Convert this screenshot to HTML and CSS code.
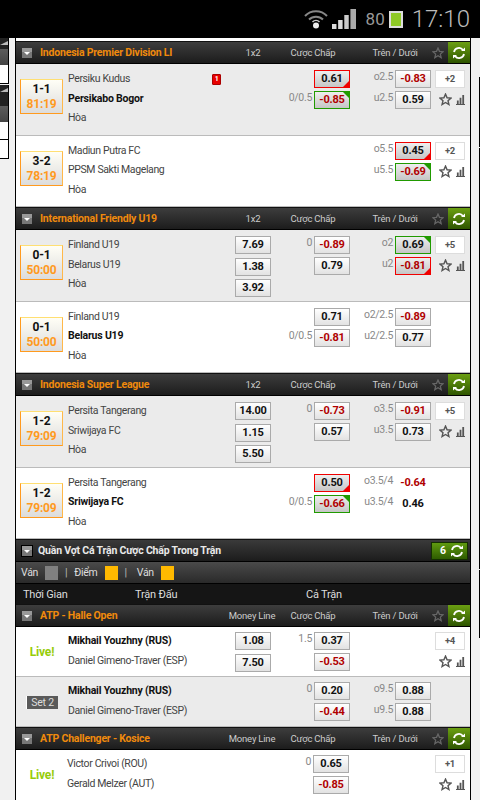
FILE: index.html
```html
<!DOCTYPE html>
<html lang="vi">
<head>
    <meta charset="UTF-8">
    <meta name="viewport" content="width=device-width, initial-scale=1.0">
    <title>Cược Chấp</title>
    <link rel="stylesheet" href="styles.css">
</head>
<body>
    <svg class="defs" width="0" height="0">
        <symbol id="i-star" viewBox="0 0 14 14"><path d="M7 1.200l1.700 3.900 4.200.4-3.200 2.800 1 4.100L7 10.200l-3.700 2.200 1-4.100L1.100 5.500l4.200-.4z" fill="none" stroke="currentColor" stroke-width="1.500"/></symbol>
        <symbol id="i-bars" viewBox="0 0 10 12"><path d="M0 11h10v1H0zM1 7h2v4H1zM4 4h2v7H4zM7 1h2v10H7z" fill="currentColor"/></symbol>
        <symbol id="i-refresh" viewBox="0 0 14 14"><path d="M2 6a5 5 0 0 1 9-2M12 8a5 5 0 0 1-9 2" fill="none" stroke="currentColor" stroke-width="1.800"/><path d="M9 5h4V1.500zM5 9H1v3.500z" fill="currentColor"/></symbol>
        <symbol id="i-toggle" viewBox="0 0 10 10"><rect width="10" height="10" fill="#777"/><rect width="10" height="4" fill="#999"/><path d="M2 4h6L5 7z" fill="#fff"/></symbol>
    </svg>

    <!-- thanh trạng thái -->
    <div class="status-bar">
        <svg class="wifi" width="24" height="20" viewBox="0 0 24 20"><path d="M1 7a15 15 0 0 1 22 0M5 10.500a10 10 0 0 1 14 0" fill="none" stroke="#888" stroke-width="2"/><path d="M8.500 13a5 5 0 0 1 7 0" fill="none" stroke="#ccc" stroke-width="1.500"/><circle cx="12" cy="16.500" r="3" fill="#eee"/></svg>
        <svg class="signal" width="24" height="20" viewBox="0 0 21.500 20" preserveAspectRatio="none"><path d="M0 15h4v5H0z" fill="#ddd"/><path d="M5.500 11h4v9h-4z" fill="#ddd"/><path d="M11 6h4v14h-4z" fill="#ccc"/><path d="M16.500 0h5v20h-5z" fill="#aaa"/></svg>
        <span class="battery-text">80</span>
        <span class="battery"></span>
        <span class="clock">17:10</span>
    </div>

    <div class="page">
        <div class="rail-left">
            <div class="rail-block">
                <div class="rail-head"></div>
                <div class="rail-gray"></div>
                <div class="rail-cell"></div>
            </div>
            <div class="rail-block">
                <div class="rail-head full"></div>
                <div class="rail-gray"></div>
                <div class="rail-cell"></div>
                <div class="rail-cell"></div>
            </div>
        </div>

        <div class="main">
            <div class="league">
                <span class="league-title"><svg class="toggle"><use href="#i-toggle"/></svg>Indonesia Premier Division LI</span>
                <span class="col-a">1x2</span><span class="col-b">Cược Chấp</span><span class="col-c">Trên / Dưới</span>
                <span class="league-tools"><svg class="star-head"><use href="#i-star"/></svg><span class="refresh"><svg><use href="#i-refresh"/></svg></span></span>
            </div>
            <div class="match shaded">
                <div class="score"><div class="score-box"><b>1-1</b><i>81:19</i></div></div>
                <div class="teams"><div>Persiku Kudus<span class="red-card">1</span></div><div class="bold">Persikabo Bogor</div><div>Hòa</div></div>
                <div class="odds-a"></div>
                <div class="odds-b">
                    <div class="line"><a class="cell hot down">0.61</a></div>
                    <div class="line"><span class="lbl">0/0.5</span><a class="cell hot up neg">-0.85</a></div>
                </div>
                <div class="odds-c">
                    <div class="line"><span class="lbl">o2.5</span><a class="cell neg">-0.83</a></div>
                    <div class="line"><span class="lbl">u2.5</span><a class="cell">0.59</a></div>
                </div>
                <div class="side"><a class="more">+2</a><div class="tools"><svg class="star"><use href="#i-star"/></svg><svg class="bars"><use href="#i-bars"/></svg></div></div>
            </div>
            <div class="match">
                <div class="score"><div class="score-box"><b>3-2</b><i>78:19</i></div></div>
                <div class="teams"><div>Madiun Putra FC</div><div>PPSM Sakti Magelang</div><div>Hòa</div></div>
                <div class="odds-a"></div>
                <div class="odds-b"></div>
                <div class="odds-c">
                    <div class="line"><span class="lbl">o5.5</span><a class="cell hot down">0.45</a></div>
                    <div class="line"><span class="lbl">u5.5</span><a class="cell hot up neg">-0.69</a></div>
                </div>
                <div class="side"><a class="more">+2</a><div class="tools"><svg class="star"><use href="#i-star"/></svg><svg class="bars"><use href="#i-bars"/></svg></div></div>
            </div>

            <div class="league">
                <span class="league-title"><svg class="toggle"><use href="#i-toggle"/></svg>International Friendly U19</span>
                <span class="col-a">1x2</span><span class="col-b">Cược Chấp</span><span class="col-c">Trên / Dưới</span>
                <span class="league-tools"><svg class="star-head"><use href="#i-star"/></svg><span class="refresh"><svg><use href="#i-refresh"/></svg></span></span>
            </div>
            <div class="match shaded">
                <div class="score"><div class="score-box"><b>0-1</b><i>50:00</i></div></div>
                <div class="teams"><div>Finland U19</div><div>Belarus U19</div><div>Hòa</div></div>
                <div class="odds-a"><a class="cell">7.69</a><a class="cell">1.38</a><a class="cell">3.92</a></div>
                <div class="odds-b">
                    <div class="line"><span class="lbl">0</span><a class="cell neg">-0.89</a></div>
                    <div class="line"><a class="cell">0.79</a></div>
                </div>
                <div class="odds-c">
                    <div class="line"><span class="lbl">o2</span><a class="cell hot up">0.69</a></div>
                    <div class="line"><span class="lbl">u2</span><a class="cell hot down neg">-0.81</a></div>
                </div>
                <div class="side"><a class="more">+5</a><div class="tools"><svg class="star"><use href="#i-star"/></svg><svg class="bars"><use href="#i-bars"/></svg></div></div>
            </div>
            <div class="match">
                <div class="score"><div class="score-box"><b>0-1</b><i>50:00</i></div></div>
                <div class="teams"><div>Finland U19</div><div class="bold">Belarus U19</div><div>Hòa</div></div>
                <div class="odds-a"></div>
                <div class="odds-b">
                    <div class="line"><a class="cell">0.71</a></div>
                    <div class="line"><span class="lbl">0/0.5</span><a class="cell neg">-0.81</a></div>
                </div>
                <div class="odds-c">
                    <div class="line"><span class="lbl">o2/2.5</span><a class="cell neg">-0.89</a></div>
                    <div class="line"><span class="lbl">u2/2.5</span><a class="cell">0.77</a></div>
                </div>
                <div class="side"></div>
            </div>

            <div class="league">
                <span class="league-title"><svg class="toggle"><use href="#i-toggle"/></svg>Indonesia Super League</span>
                <span class="col-a">1x2</span><span class="col-b">Cược Chấp</span><span class="col-c">Trên / Dưới</span>
                <span class="league-tools"><svg class="star-head"><use href="#i-star"/></svg><span class="refresh"><svg><use href="#i-refresh"/></svg></span></span>
            </div>
            <div class="match shaded">
                <div class="score"><div class="score-box"><b>1-2</b><i>79:09</i></div></div>
                <div class="teams"><div>Persita Tangerang</div><div>Sriwijaya FC</div><div>Hòa</div></div>
                <div class="odds-a"><a class="cell">14.00</a><a class="cell">1.15</a><a class="cell">5.50</a></div>
                <div class="odds-b">
                    <div class="line"><span class="lbl">0</span><a class="cell neg">-0.73</a></div>
                    <div class="line"><a class="cell">0.57</a></div>
                </div>
                <div class="odds-c">
                    <div class="line"><span class="lbl">o3.5</span><a class="cell neg">-0.91</a></div>
                    <div class="line"><span class="lbl">u3.5</span><a class="cell">0.73</a></div>
                </div>
                <div class="side"><a class="more">+5</a><div class="tools"><svg class="star"><use href="#i-star"/></svg><svg class="bars"><use href="#i-bars"/></svg></div></div>
            </div>
            <div class="match">
                <div class="score"><div class="score-box"><b>1-2</b><i>79:09</i></div></div>
                <div class="teams"><div>Persita Tangerang</div><div class="bold">Sriwijaya FC</div><div>Hòa</div></div>
                <div class="odds-a"></div>
                <div class="odds-b">
                    <div class="line"><a class="cell hot down">0.50</a></div>
                    <div class="line"><span class="lbl">0/0.5</span><a class="cell hot up neg">-0.66</a></div>
                </div>
                <div class="odds-c">
                    <div class="line"><span class="lbl">o3.5/4</span><a class="cell plain neg">-0.64</a></div>
                    <div class="line"><span class="lbl">u3.5/4</span><a class="cell plain">0.46</a></div>
                </div>
                <div class="side"></div>
            </div>

            <!-- quần vợt -->
            <div class="sport">
                <span class="sport-title"><svg class="toggle boxed"><use href="#i-toggle"/></svg>Quần Vợt Cá Trận Cược Chấp Trong Trận</span>
                <span class="count">6<svg><use href="#i-refresh"/></svg></span>
            </div>
            <div class="legend">
                <span>Ván</span><span class="sq gray"></span><span class="sep">|</span><span>Điểm</span><span class="sq yellow"></span><span class="sep">|</span><span class="far">Ván</span><span class="sq yellow"></span>
            </div>
            <div class="columns">
                <span class="c-time">Thời Gian</span><span class="c-match">Trận Đấu</span><span class="c-full">Cả Trận</span>
            </div>

            <div class="league">
                <span class="league-title"><svg class="toggle"><use href="#i-toggle"/></svg>ATP - Halle Open</span>
                <span class="col-a wide">Money Line</span><span class="col-b">Cược Chấp</span><span class="col-c">Trên / Dưới</span>
                <span class="league-tools"><svg class="star-head"><use href="#i-star"/></svg><span class="refresh"><svg><use href="#i-refresh"/></svg></span></span>
            </div>
            <div class="match tennis">
                <div class="score"><span class="live">Live!</span></div>
                <div class="teams"><div class="bold">Mikhail Youzhny (RUS)</div><div>Daniel Gimeno-Traver (ESP)</div></div>
                <div class="odds-a"><a class="cell">1.08</a><a class="cell">7.50</a></div>
                <div class="odds-b">
                    <div class="line"><span class="lbl">1.5</span><a class="cell">0.37</a></div>
                    <div class="line"><a class="cell neg">-0.53</a></div>
                </div>
                <div class="odds-c"></div>
                <div class="side"><a class="more">+4</a><div class="tools"><svg class="star"><use href="#i-star"/></svg><svg class="bars"><use href="#i-bars"/></svg></div></div>
            </div>
            <div class="match tennis shaded">
                <div class="score"><span class="set">Set 2</span></div>
                <div class="teams"><div class="bold">Mikhail Youzhny (RUS)</div><div>Daniel Gimeno-Traver (ESP)</div></div>
                <div class="odds-a"></div>
                <div class="odds-b">
                    <div class="line"><span class="lbl">0</span><a class="cell">0.20</a></div>
                    <div class="line"><a class="cell neg">-0.44</a></div>
                </div>
                <div class="odds-c">
                    <div class="line"><span class="lbl">o9.5</span><a class="cell">0.88</a></div>
                    <div class="line"><span class="lbl">u9.5</span><a class="cell">0.88</a></div>
                </div>
                <div class="side"></div>
            </div>

            <div class="league">
                <span class="league-title"><svg class="toggle"><use href="#i-toggle"/></svg>ATP Challenger - Kosice</span>
                <span class="col-a wide">Money Line</span><span class="col-b">Cược Chấp</span><span class="col-c">Trên / Dưới</span>
                <span class="league-tools"><svg class="star-head"><use href="#i-star"/></svg><span class="refresh"><svg><use href="#i-refresh"/></svg></span></span>
            </div>
            <div class="match tennis nudge">
                <div class="score"><span class="live">Live!</span></div>
                <div class="teams"><div>Victor Crivoi (ROU)</div><div>Gerald Melzer (AUT)</div></div>
                <div class="odds-a"></div>
                <div class="odds-b">
                    <div class="line"><span class="lbl">0</span><a class="cell">0.65</a></div>
                    <div class="line"><a class="cell neg">-0.85</a></div>
                </div>
                <div class="odds-c"></div>
                <div class="side"><a class="more">+1</a><div class="tools"><svg class="star"><use href="#i-star"/></svg><svg class="bars"><use href="#i-bars"/></svg></div></div>
            </div>
        </div>

        <div class="rail-right">
            <div class="rail-stub top"></div>
            <div class="rail-stub s1"></div>
            <div class="rail-stub s2"></div>
            <div class="rail-stub s3"></div>
        </div>
    </div>
</body>
</html>
```

FILE: styles.css
```css
* {
    margin: 0;
    padding: 0;
    box-sizing: border-box;
}

html, body {
    height: 800px;
    overflow: hidden;
}

body {
    font-family: Roboto, 'Open Sans', sans-serif;
    font-size: 10.5px;
    letter-spacing: -0.2px;
    background: #f1f1f1;
    color: #444;
}

.defs {
    display: block;
    height: 0;
}

.status-bar {
    height: 38px;
    background: #000;
    display: flex;
    align-items: center;
    justify-content: flex-end;
    padding-right: 10px;
    letter-spacing: 0;
}

.wifi {
    margin-right: 4px;
}

.signal {
    margin-right: 10px;
}

.battery-text {
    font-size: 17px;
    color: #999;
    margin-right: 4px;
}

.battery {
    width: 14px;
    height: 17px;
    background: #8fc926;
    border: 2px solid #ddd;
    margin-right: 9px;
}

.clock {
    font-weight: 300;
    font-size: 24px;
    color: #bbb;
}

.page {
    display: flex;
    height: 762px;
}

.rail-left {
    width: 15px;
    flex: none;
    padding-right: 6px;
}

.rail-block {
    border: 1px solid #000;
    border-left: none;
    border-top: none;
    background: #fff;
    margin-bottom: 1px;
}

.rail-head {
    height: 11px;
    background: #222;
    position: relative;
}

.rail-head.full {
    height: 21px;
}

.rail-head::after {
    content: '';
    position: absolute;
    right: 0;
    top: 3px;
    border-right: 8px solid #bbb;
    border-top: 4px solid transparent;
}

.rail-gray {
    height: 16px;
    background: linear-gradient(#5c5c5c, #444);
}

.rail-cell {
    height: 18px;
    background: #fff;
    border-bottom: 1px solid #000;
}

.rail-cell:last-child {
    border-bottom: none;
}

.main {
    width: 456px;
    flex: none;
    background: #fff;
    border-left: 1px solid #000;
    border-right: 1px solid #000;
    padding-top: 3px;
    overflow: hidden;
}

.rail-right {
    flex: 1;
    padding-left: 8px;
}

.rail-stub {
    background: #fff;
    border-left: 1px solid #000;
    border-top: 1px solid #000;
}

.rail-stub.top {
    height: 35px;
    background: none;
    border: none;
    margin-bottom: 4px;
}

.rail-stub.s1 {
    height: 70px;
    margin-bottom: 1px;
}

.rail-stub.s2 {
    height: 421px;
    margin-bottom: 1px;
}

.rail-stub.s3 {
    height: 68px;
    border-bottom: 1px solid #000;
}

.league {
    height: 23px;
    display: grid;
    grid-template-columns: 219px 36px 79px 81px 1fr;
    align-items: center;
    background: linear-gradient(#3d3d3d, #1c1c1c);
    border-top: 1px solid #111;
    border-bottom: 1px solid #000;
    color: #ccc;
    font-size: 9.5px;
    text-align: center;
    white-space: nowrap;
}

.league-title {
    display: flex;
    align-items: center;
    padding-left: 6px;
    color: #f08a0c;
    font-size: 10.5px;
    font-weight: 700;
}

.toggle {
    width: 10px;
    height: 10px;
    margin-right: 8px;
    flex: none;
}

.col-b {
    padding-left: 5px;
}

.col-c {
    padding-left: 9px;
}

.col-a.wide {
    margin-left: -11px;
    margin-right: -9px;
}

.league-tools {
    display: flex;
    align-items: center;
    justify-content: flex-end;
    height: 21px;
}

.star-head {
    width: 12px;
    height: 12px;
    margin-right: 4px;
    color: #666;
}

.refresh {
    width: 22px;
    height: 21px;
    display: flex;
    align-items: center;
    justify-content: center;
    background: linear-gradient(#6b9f12, #2e5500);
    color: #fff;
}

.refresh svg {
    width: 14px;
    height: 14px;
}

.match {
    display: grid;
    grid-template-columns: 52px 167px 36px 79px 81px 1fr;
    height: 71.5px;
    padding-top: 6px;
    background: #fff;
    border-bottom: 1px solid #bbb;
}

.match.shaded {
    background: #ebebeb;
}

.match.tennis {
    height: 50px;
    padding-top: 5px;
}

.match:last-child {
    border-bottom: none;
}

.score {
    padding: 9px 5px 0 4px;
}

.tennis .score {
    padding: 0;
    display: flex;
    align-items: center;
    justify-content: center;
    height: 40px;
}

.score-box {
    height: 35px;
    text-align: center;
    background: linear-gradient(#fffef6, #dcdcdc);
    border: 1px solid #ff9a1e;
    border-top-color: #ffdf72;
    border-right-color: #ffb84a;
    line-height: 15px;
    padding-top: 2px;
}

.score-box b {
    display: block;
    color: #111;
    font-size: 12px;
}

.score-box i {
    display: block;
    color: #ff9a1e;
    font-style: normal;
    font-weight: 700;
    font-size: 12px;
}

.live {
    color: #96cc0a;
    font-weight: 700;
    font-size: 12px;
}

.set {
    background: #5a5a5a;
    border-left: 1px solid #fff;
    color: #ddd;
    padding: 0 4px;
    line-height: 13px;
}

.teams {
    line-height: 19.5px;
    letter-spacing: -0.37px;
    margin-top: -1px;
    white-space: nowrap;
    position: relative;
}

.tennis .teams {
    line-height: 20px;
    margin-top: -1px;
}

.nudge .teams {
    margin-left: -1px;
}

.nudge .odds-b .line {
    margin-right: 1px;
}

.bold {
    font-weight: 700;
    letter-spacing: -0.2px;
    color: #111;
}

.red-card {
    position: absolute;
    left: 144px;
    top: 5px;
    width: 9px;
    height: 11px;
    border-radius: 1px;
    background: #e80000;
    border: 1px solid #a00;
    color: #fff;
    font-size: 7px;
    font-weight: 700;
    line-height: 9px;
    text-align: center;
}

.odds-a {
    display: flex;
    flex-direction: column;
    gap: 3.5px;
}

.odds-b, .odds-c {
    display: flex;
    flex-direction: column;
    gap: 3px;
}

.line {
    display: flex;
    justify-content: flex-end;
    align-items: flex-start;
    height: 18px;
}

.lbl {
    color: #888;
    font-size: 10.5px;
    letter-spacing: -0.3px;
    line-height: 14px;
    margin-right: 2px;
}

.cell {
    display: block;
    position: relative;
    width: 36px;
    height: 18px;
    background: linear-gradient(#fff, #e2e2e2);
    border: 1px solid #aaa;
    color: #111;
    font-size: 11px;
    font-weight: 700;
    line-height: 15px;
    text-align: center;
}

.cell.neg {
    color: #b00000;
}

.cell.plain {
    background: none;
    border-color: transparent;
}

.cell.hot {
    background: linear-gradient(#eee, #c6c6c6);
}

.cell.hot.down {
    border-color: #f00000;
}

.cell.hot.up {
    border-color: #209a00;
}

.cell.hot::after {
    content: '';
    position: absolute;
    right: 0;
    width: 0;
    height: 0;
    border-left: 6px solid transparent;
}

.cell.hot.down::after {
    bottom: 0;
    border-bottom: 6px solid #f00000;
}

.cell.hot.up::after {
    top: 0;
    border-top: 6px solid #209a00;
}

.side {
    padding-left: 4px;
}

.more {
    display: block;
    width: 30px;
    height: 18px;
    background: #fff;
    border: 1px solid #ddd;
    color: #555;
    font-size: 9.5px;
    font-weight: 700;
    line-height: 16px;
    text-align: center;
}

.tools {
    display: flex;
    justify-content: space-between;
    align-items: center;
    width: 30px;
    margin-top: 5px;
    padding-left: 4px;
}

.star {
    width: 13px;
    height: 13px;
    color: #555;
}

.bars {
    width: 9px;
    height: 11px;
    color: #555;
}

.sport {
    height: 23px;
    display: flex;
    align-items: center;
    justify-content: space-between;
    padding: 0 2px 0 6px;
    background: linear-gradient(#3a3a3a, #1c1c1c);
    border-top: 1px solid #111;
    border-bottom: 1px solid #000;
}

.sport-title {
    display: flex;
    align-items: center;
    color: #e8e8e8;
    font-size: 10.5px;
    font-weight: 700;
}

.toggle.boxed {
    outline: 1px solid #000;
    margin-right: 6px;
}

.count {
    display: flex;
    align-items: center;
    gap: 4px;
    width: 37px;
    height: 18px;
    padding-left: 8px;
    background: linear-gradient(#5f9a10, #2e5c00);
    border: 1px solid #143000;
    color: #fff;
    font-weight: 700;
}

.count svg {
    width: 14px;
    height: 14px;
}

.legend {
    height: 22px;
    display: flex;
    align-items: center;
    gap: 7px;
    padding-left: 5px;
    background: linear-gradient(#4a4a4a, #2a2a2a);
    border-bottom: 1px solid #000;
    color: #ddd;
    letter-spacing: -0.3px;
}

.sq {
    width: 13px;
    height: 14px;
}

.sq.gray {
    background: #808080;
}

.sq.yellow {
    background: #ffb900;
}

.sep {
    color: #bbb;
}

.far {
    margin-left: 3px;
}

.columns {
    height: 20px;
    display: flex;
    align-items: center;
    background: #151515;
    color: #ddd;
    font-size: 11px;
}

.c-time {
    margin-left: 7px;
    width: 112px;
}

.c-match {
    width: 171px;
}
```
